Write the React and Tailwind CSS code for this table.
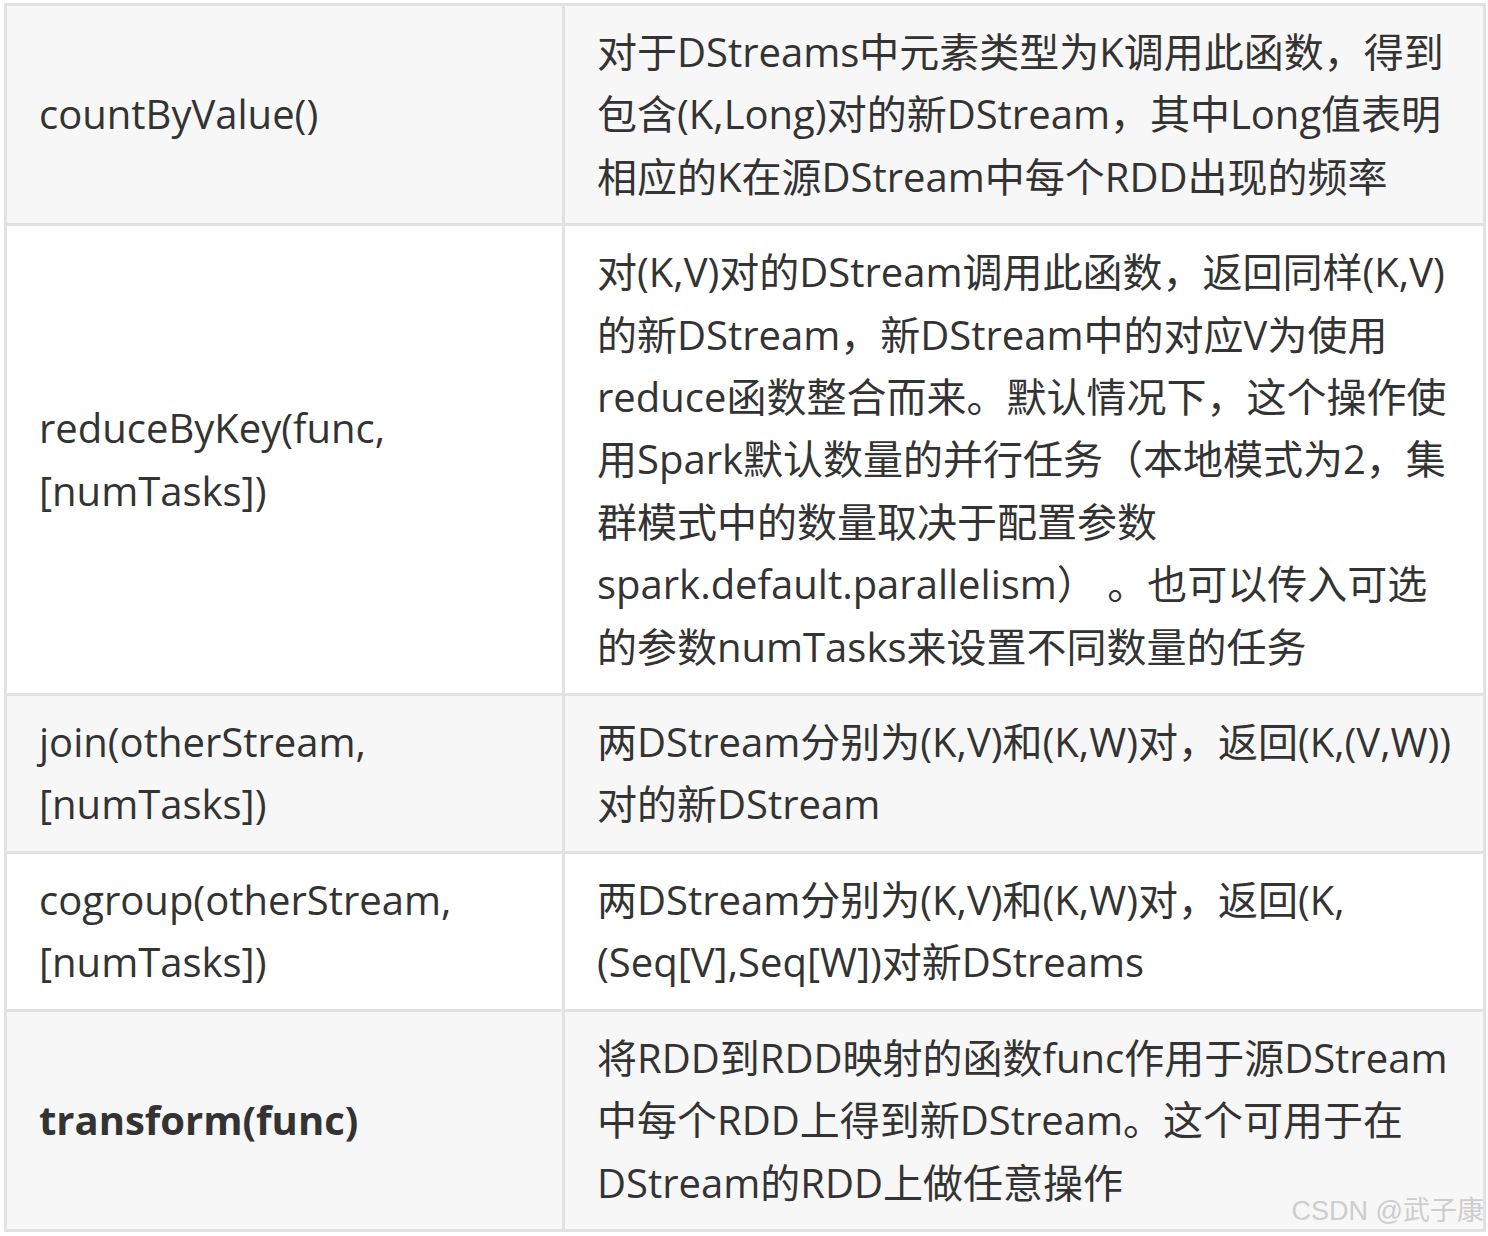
const rows = [
  {
    name: ['countByValue()'],
    desc: [
      '对于DStreams中元素类型为K调用此函数，得到',
      '包含(K,Long)对的新DStream，其中Long值表明',
      '相应的K在源DStream中每个RDD出现的频率',
    ],
    bg: 'bg-[#f7f7f7]',
  },
  {
    name: ['reduceByKey(func,', '[numTasks])'],
    desc: [
      '对(K,V)对的DStream调用此函数，返回同样(K,V)',
      '的新DStream，新DStream中的对应V为使用',
      'reduce函数整合而来。默认情况下，这个操作使',
      '用Spark默认数量的并行任务（本地模式为2，集',
      '群模式中的数量取决于配置参数',
      'spark.default.parallelism） 。也可以传入可选',
      '的参数numTasks来设置不同数量的任务',
    ],
    bg: 'bg-white',
  },
  {
    name: ['join(otherStream,', '[numTasks])'],
    desc: ['两DStream分别为(K,V)和(K,W)对，返回(K,(V,W))', '对的新DStream'],
    bg: 'bg-[#f7f7f7]',
  },
  {
    name: ['cogroup(otherStream,', '[numTasks])'],
    desc: ['两DStream分别为(K,V)和(K,W)对，返回(K,', '(Seq[V],Seq[W])对新DStreams'],
    bg: 'bg-white',
  },
  {
    name: ['transform(func)'],
    bold: true,
    desc: [
      '将RDD到RDD映射的函数func作用于源DStream',
      '中每个RDD上得到新DStream。这个可用于在',
      'DStream的RDD上做任意操作',
    ],
    bg: 'bg-[#f7f7f7]',
  },
];

export default function App() {
  return (
    <div className="relative h-[1236px] w-[1488px] bg-white pt-[3px] pl-[4px] font-['Open_Sans','Noto_Sans_CJK_SC',sans-serif] text-[40px] leading-[62.4px] text-[#333]">
      <div className="grid w-[1482px] grid-cols-[555px_1fr] gap-[3px] bg-[#e2e2e2] p-[3px]">
        {rows.map((r, i) => (
          <div key={i} className="contents">
            <div className={`${r.bg} flex flex-col justify-center pl-[32px] pr-[20px] py-[15px] ${r.bold ? 'font-bold' : ''}`}>
              {r.name.map((l, j) => (
                <span key={j} className="block whitespace-nowrap">{l}</span>
              ))}
            </div>
            <div className={`${r.bg} pl-[32px] pr-[20px] py-[15px]`}>
              {r.desc.map((l, j) => (
                <span key={j} className="block whitespace-nowrap">{l}</span>
              ))}
            </div>
          </div>
        ))}
      </div>
      <div className="absolute right-[4px] top-[1191px] font-['Liberation_Sans','Noto_Sans_CJK_SC',sans-serif] text-[27px] leading-[40px] text-[#cdcdcd]">
        CSDN @武子康
      </div>
    </div>
  );
}
